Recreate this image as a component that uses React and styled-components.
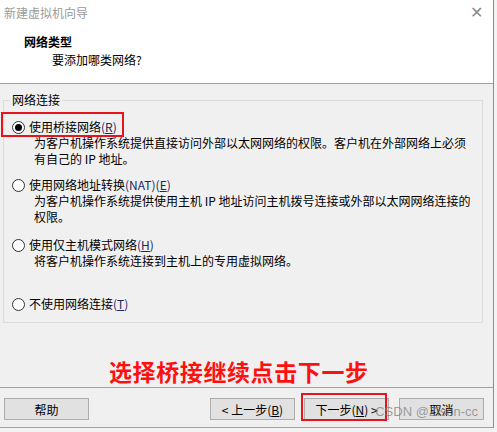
import React from "react";
import styled, { createGlobalStyle } from "styled-components";

const GlobalStyle = createGlobalStyle`
  body {
    margin: 0;
    background: #f3f3f3;
    font-family: "Noto Sans CJK SC", "Liberation Sans", sans-serif;
    font-size: 12px;
    color: #000;
  }
`;

const Window = styled.div`
  width: 493px;
  border-right: 1px solid #8c8c8c;
  border-bottom: 1px solid #a0a0a0;
  background: #f0f0f0;
  display: flex;
  flex-direction: column;
`;

const TitleBar = styled.div`
  height: 24px;
  background: #fff;
  display: flex;
  align-items: center;
  justify-content: space-between;
  padding: 0 10px 0 4px;
  color: #9a9a9a;
  font-size: 12px;
`;

const Close = styled.span`
  font-family: "Liberation Sans", sans-serif;
  font-size: 16px;
  font-weight: 300;
  color: #8a8a8a;
`;

const Header = styled.div`
  height: 60px;
  box-sizing: border-box;
  background: #fff;
  border-bottom: 1px solid #a0a0a0;
  padding-top: 10px;
`;

const HeaderTitle = styled.div`
  font-weight: bold;
  line-height: 16px;
  padding-left: 24px;
`;

const HeaderSub = styled.div`
  line-height: 16px;
  padding-left: 52px;
  margin-top: 2px;
`;

const Content = styled.div`
  padding: 0 10px 0 3px;
`;

const Group = styled.fieldset`
  margin: 8px 0 0 0;
  padding: 11px 0 10px 8px;
  border: 1px solid #dcdcdc;
  display: flex;
  flex-direction: column;
`;

const Legend = styled.legend`
  padding: 0 2px;
  margin-left: -2px;
  line-height: 16px;
`;

const Option = styled.div`
  margin-top: ${(p) => p.$gap || 0}px;
`;

const OptionLabel = styled.label`
  position: relative;
  display: flex;
  width: fit-content;
  height: 16px;
  align-items: center;
  gap: 4px;
  line-height: 16px;
  ${(p) =>
    p.$marked &&
    `
    &::before {
      content: "";
      position: absolute;
      left: -11px;
      right: -7px;
      top: -7px;
      bottom: -2px;
      border: 2px solid #e8141b;
    }
  `}
`;

const Radio = styled.span`
  width: 13px;
  height: 13px;
  box-sizing: border-box;
  border-radius: 50%;
  border: 1px solid #333;
  background: #fff;
  display: flex;
  align-items: center;
  justify-content: center;

  &::after {
    content: "";
    width: 7px;
    height: 7px;
    border-radius: 50%;
    background: ${(p) => (p.$checked ? "#000" : "transparent")};
  }
`;

const Key = styled.span`
  color: #1c2660;
`;

const Desc = styled.div`
  padding-left: 22px;
  padding-right: 10px;
  line-height: 16px;
`;

const Annotation = styled.div`
  height: 64px;
  box-sizing: border-box;
  padding: 33px 0 0 106px;
  color: #ff1010;
  font-size: 23px;
  font-weight: bold;
  line-height: 30px;
  letter-spacing: 0.6px;
`;

const Footer = styled.div`
  position: relative;
  border-top: 1px solid #a0a0a0;
  padding: 10px 9px 7px 4px;
  display: flex;
  align-items: center;
`;

const Spacer = styled.div`
  flex: 1;
`;

const Button = styled.button`
  position: relative;
  width: 85px;
  height: 22px;
  margin-left: ${(p) => p.$gap || 0}px;
  background: #e1e1e1;
  border: 1px solid #adadad;
  font-family: "Noto Sans CJK SC", "Liberation Sans", sans-serif;
  font-size: 12px;
  color: #000;
  padding: 0;
  ${(p) =>
    p.$marked &&
    `
    &::before {
      content: "";
      position: absolute;
      left: -4px;
      right: 1px;
      top: -6px;
      bottom: -2px;
      border: 2px solid #e8141b;
    }
  `}
`;

const Watermark = styled.span`
  position: absolute;
  right: 15px;
  bottom: 8px;
  font-family: "Liberation Sans", sans-serif;
  font-size: 13px;
  color: rgba(120, 120, 120, 0.7);
  pointer-events: none;
`;

export default function App() {
  return (
    <>
      <GlobalStyle />
      <Window>
        <TitleBar>
          <span>新建虚拟机向导</span>
          <Close>✕</Close>
        </TitleBar>
        <Header>
          <HeaderTitle>网络类型</HeaderTitle>
          <HeaderSub>要添加哪类网络?</HeaderSub>
        </Header>
        <Content>
          <Group>
            <Legend>网络连接</Legend>
            <Option>
              <OptionLabel $marked>
                <Radio $checked />
                <span>
                  使用桥接网络<Key>(<u>R</u>)</Key>
                </span>
              </OptionLabel>
              <Desc>
                为客户机操作系统提供直接访问外部以太网网络的权限。客户机在外部网络上必须有自己的 IP 地址。
              </Desc>
            </Option>
            <Option $gap={10}>
              <OptionLabel>
                <Radio />
                <span>
                  使用网络地址转换<Key>(NAT)(<u>E</u>)</Key>
                </span>
              </OptionLabel>
              <Desc>
                为客户机操作系统提供使用主机 IP 地址访问主机拨号连接或外部以太网网络连接的权限。
              </Desc>
            </Option>
            <Option $gap={12}>
              <OptionLabel>
                <Radio />
                <span>
                  使用仅主机模式网络<Key>(<u>H</u>)</Key>
                </span>
              </OptionLabel>
              <Desc>将客户机操作系统连接到主机上的专用虚拟网络。</Desc>
            </Option>
            <Option $gap={27}>
              <OptionLabel>
                <Radio />
                <span>
                  不使用网络连接<Key>(<u>T</u>)</Key>
                </span>
              </OptionLabel>
            </Option>
          </Group>
          <Annotation>选择桥接继续点击下一步</Annotation>
        </Content>
        <Footer>
          <Button>帮助</Button>
          <Spacer />
          <Button>&lt; 上一步(<u>B</u>)</Button>
          <Button $gap={9} $marked>
            下一步(<u>N</u>) &gt;
          </Button>
          <Button $gap={10}>取消</Button>
          <Watermark>CSDN @Zison-cc</Watermark>
        </Footer>
      </Window>
    </>
  );
}
